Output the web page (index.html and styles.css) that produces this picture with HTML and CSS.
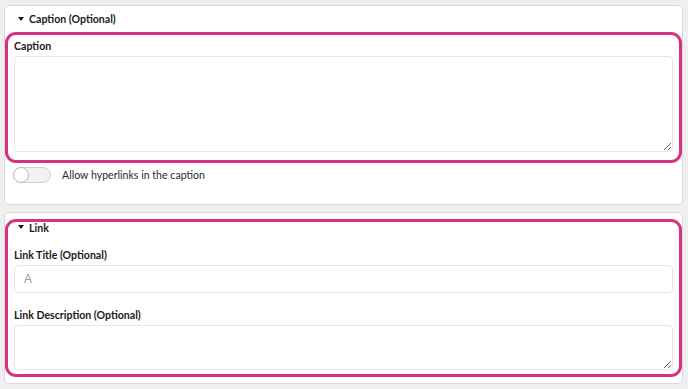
FILE: index.html
```html
<!DOCTYPE html>
<html lang="en">
<head>
    <meta charset="UTF-8">
    <title>Caption and Link</title>
    <link rel="stylesheet" href="styles.css">
</head>
<body>

<div class="page">
    <section class="card card-caption">
        <div class="card-head">
            <span class="caret"></span>
            <span>Caption (Optional)</span>
        </div>
        <div class="highlight hl-caption">
            <label class="field-label">Caption</label>
            <textarea class="field-area area-caption"></textarea>
        </div>
        <div class="toggle-row">
            <span class="toggle"><span class="knob"></span></span>
            <span class="toggle-text">Allow hyperlinks in the caption</span>
        </div>
    </section>

    <section class="card card-link">
        <div class="highlight hl-link">
            <div class="card-head link-head">
                <span class="caret"></span>
                <span>Link</span>
            </div>
            <label class="field-label">Link Title (Optional)</label>
            <div class="field-input"><span class="type-icon">A</span></div>
            <label class="field-label desc-label">Link Description (Optional)</label>
            <textarea class="field-area area-desc"></textarea>
        </div>
    </section>
</div>

</body>
</html>
```

FILE: styles.css
```css
body {
    margin: 0;
    background-color: #efefef;
    font-family: 'Lato', 'Noto Sans', sans-serif;
    color: #1a1a1a;
}

.page {
    padding: 5px 5px 0 4px;
}

.card {
    background-color: #fff;
    border: 1px solid #d9d9d9;
    border-radius: 5px;
    margin-bottom: 7px;
}

.card-head {
    display: flex;
    align-items: center;
    gap: 5px;
    height: 26px;
    padding-left: 13px;
    font-size: 10.6px;
    font-weight: bold;
}

.caret {
    width: 0;
    height: 0;
    border-left: 3.5px solid transparent;
    border-right: 3.5px solid transparent;
    border-top: 4px solid #1a1a1a;
    margin-top: -1px;
}

.highlight {
    border: 3px solid #d6307f;
    border-radius: 11px;
    padding: 4px 6px 8px 6px;
}

.field-label {
    display: block;
    font-size: 10.6px;
    font-weight: bold;
    line-height: 14px;
    margin-bottom: 3px;
}

.field-area {
    display: block;
    box-sizing: border-box;
    width: 100%;
    border: 1px solid #e6e6e6;
    border-radius: 4px;
    resize: vertical;
    font-family: inherit;
    margin: 0;
}

.area-caption {
    height: 96px;
}

.toggle-row {
    display: flex;
    align-items: center;
    gap: 11px;
    padding: 4px 0 21px 8px;
}

.toggle {
    display: block;
    width: 36px;
    height: 14px;
    border: 1px solid #cfcfcf;
    border-radius: 8px;
    background-color: #f2f2f2;
    position: relative;
}

.knob {
    position: absolute;
    left: -1px;
    top: -1px;
    width: 14px;
    height: 14px;
    border: 1px solid #b9b9b9;
    border-radius: 50%;
    background-color: #fff;
}

.toggle-text {
    font-size: 10.6px;
    color: #2a2a2a;
}

.hl-link {
    margin: 6px 0;
    padding-top: 0;
    padding-bottom: 4px;
}

.link-head {
    height: 11px;
    padding-left: 4px;
    margin-bottom: 15px;
}

.field-input {
    box-sizing: border-box;
    height: 28px;
    border: 1px solid #e6e6e6;
    border-radius: 4px;
    display: flex;
    align-items: center;
    padding-left: 9px;
}

.type-icon {
    color: #9a9a9a;
    font-size: 12px;
    font-family: 'Liberation Sans', sans-serif;
}

.desc-label {
    margin-top: 15px;
}

.area-desc {
    height: 45px;
}
```
